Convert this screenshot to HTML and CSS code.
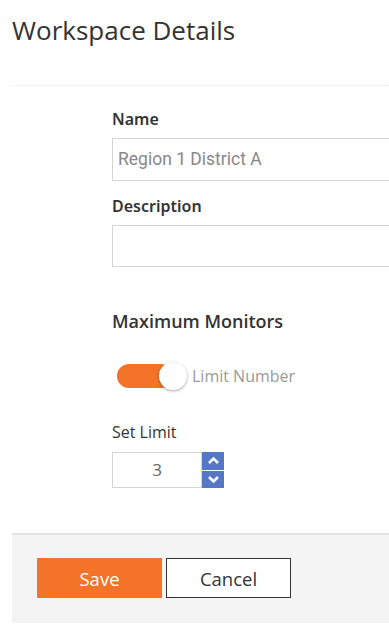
FILE: index.html
```html
<!DOCTYPE html>
<html>
<head>
<meta charset="utf-8">
<link rel="stylesheet" href="styles.css">
</head>
<body>
<div class="page">
  <h1 class="title">Workspace Details</h1>
  <div class="panel">
    <div class="form">
      <div class="field">
        <label class="field-label">Name</label>
        <div class="text-input placeholder">Region 1 District A</div>
      </div>
      <div class="field">
        <label class="field-label">Description</label>
        <div class="text-input"></div>
      </div>
      <h2 class="section-title">Maximum Monitors</h2>
      <div class="toggle-row">
        <span class="toggle"><span class="knob"></span></span>
        <span class="toggle-label">Limit Number</span>
      </div>
      <div class="limit">
        <div class="limit-label">Set Limit</div>
        <div class="spinner">
          <div class="spin-value">3</div>
          <div class="spin-buttons">
            <span class="spin-btn"><svg width="13" height="9" viewBox="0 0 13 9"><path d="M2 7 L6.5 2.5 L11 7" fill="none" stroke="#fff" stroke-width="2.6"/></svg></span>
            <span class="spin-btn"><svg width="13" height="9" viewBox="0 0 13 9"><path d="M2 2 L6.5 6.5 L11 2" fill="none" stroke="#fff" stroke-width="2.6"/></svg></span>
          </div>
        </div>
      </div>
    </div>
    <div class="footer">
      <button class="btn btn-primary">Save</button>
      <button class="btn btn-secondary">Cancel</button>
    </div>
  </div>
</div>
</body>
</html>
```
FILE: styles.css
```css
html, body {
  margin: 0;
  padding: 0;
  background: #fff;
  overflow: hidden;
}
body {
  font-family: "Open Sans", "Noto Sans", sans-serif;
  color: #333;
}
.page {
  width: 389px;
  padding-left: 12px;
  box-sizing: border-box;
}
.title {
  margin: 0;
  padding-top: 12px;
  height: 85px;
  box-sizing: border-box;
  font-size: 26px;
  font-weight: 400;
  line-height: 36px;
  color: #333;
}
.panel {
  border-top: 1px dotted #e6e6e6;
  overflow: hidden;
}
.form {
  padding-left: 100px;
  padding-top: 23px;
  height: 447px;
  box-sizing: border-box;
}
.field {
  display: flex;
  flex-direction: column;
  width: 300px;
}
.field-label {
  font-family: "Noto Sans", Roboto, sans-serif;
  font-size: 16px;
  font-weight: 600;
  line-height: 21px;
  color: #333;
  margin-bottom: 8px;
}
.text-input {
  height: 43px;
  box-sizing: border-box;
  border: 1px solid #d4d4d4;
  padding: 0 5px;
  font-family: Roboto, sans-serif;
  font-size: 17.5px;
  line-height: 41px;
  color: #888;
  margin-bottom: 15px;
}
.field + .field .text-input {
  height: 42px;
}
.section-title {
  margin: 27px 0 0;
  font-size: 18px;
  font-weight: 600;
  line-height: 24px;
  color: #333;
}
.toggle-row {
  display: flex;
  align-items: center;
  margin-top: 29px;
  height: 28px;
  padding-left: 5px;
}
.toggle {
  position: relative;
  width: 56px;
  height: 24px;
  background: #f37329;
  border-radius: 12px;
}
.knob {
  position: absolute;
  right: -14px;
  top: -2px;
  width: 28px;
  height: 28px;
  border-radius: 50%;
  background: #fff;
  box-shadow: 0 1px 3px rgba(0,0,0,0.35);
}
.toggle-label {
  margin-left: 19px;
  font-size: 16px;
  color: #999;
}
.limit {
  margin-top: 32px;
}
.limit-label {
  font-size: 16px;
  line-height: 20px;
  color: #333;
  margin-bottom: 10px;
}
.spinner {
  display: flex;
  height: 36px;
}
.spin-value {
  width: 90px;
  box-sizing: border-box;
  border: 1px solid #d4d4d4;
  text-align: center;
  font-size: 17px;
  line-height: 34px;
  color: #666;
}
.spin-buttons {
  display: flex;
  flex-direction: column;
  gap: 1px;
  width: 22px;
}
.spin-btn {
  flex: 1;
  background: #5677c4;
  display: flex;
  align-items: center;
  justify-content: center;
}
.footer {
  background: #f4f4f4;
  border-top: 2px solid #e4e4e4;
  padding: 23px 25px 25px;
  display: flex;
  gap: 4px;
}
.btn {
  width: 125px;
  height: 40px;
  padding: 0;
  font-family: "Open Sans", sans-serif;
  font-size: 18.5px;
  cursor: pointer;
  border-radius: 0;
}
.btn-primary {
  background: #f37329;
  color: #fff;
  border: none;
}
.btn-secondary {
  background: #fff;
  color: #333;
  border: 1px solid #333;
}
```
